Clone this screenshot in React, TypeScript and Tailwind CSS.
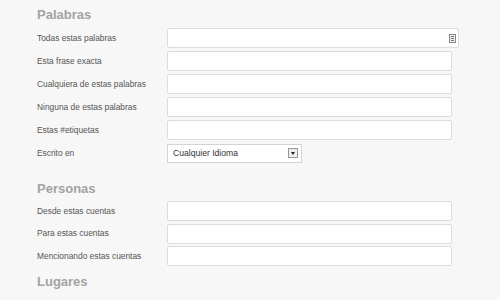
import React from 'react';

const Field: React.FC<{ label: string; wide?: boolean; icon?: boolean }> = ({ label, wide, icon }) => (
    <div className="flex items-center h-[20px]">
        <label className="w-[130px] text-[8.4px] text-[#555]">{label}</label>
        <div className={`relative h-[20px] bg-white border border-[#dcdcdc] rounded-[2px] ${wide ? 'w-[292px]' : 'w-[285px]'}`}>
            {icon && (
                <div className="absolute right-[2px] top-[5px] w-[7px] h-[9px] border border-[#888] bg-[#eee] flex flex-col items-center justify-center gap-[1px]">
                    <div className="w-[3px] h-[1px] bg-[#777]" />
                    <div className="w-[3px] h-[1px] bg-[#777]" />
                    <div className="w-[3px] h-[1px] bg-[#777]" />
                </div>
            )}
        </div>
    </div>
);

const Heading: React.FC<{ children: React.ReactNode }> = ({ children }) => (
    <h2 className="text-[13px] leading-[16px] font-bold text-[#a3a3a3]">{children}</h2>
);

export default function App() {
    return (
        <div className="w-[500px] h-[300px] overflow-hidden bg-[#f7f7f7] pl-[37px] pt-[7px]" style={{ fontFamily: '"Liberation Sans", Arial, sans-serif' }}>
            <Heading>Palabras</Heading>
            <div className="flex flex-col gap-[3px] mt-[5px]">
                <Field label="Todas estas palabras" wide icon />
                <Field label="Esta frase exacta" />
                <Field label="Cualquiera de estas palabras" />
                <Field label="Ninguna de estas palabras" />
                <Field label="Estas #etiquetas" />
                <div className="flex items-center h-[20px]">
                    <label className="w-[130px] text-[8.4px] text-[#555]">Escrito en</label>
                    <div className="w-[135px] h-[19px] bg-white border border-[#d4d4d4] flex items-center justify-between pl-[5px] pr-[3px]">
                        <span className="text-[8.6px] text-[#333]">Cualquier Idioma</span>
                        <div className="w-[10px] h-[10px] border border-[#999] bg-[#eee] flex items-center justify-center">
                            <div className="w-0 h-0 border-l-[2.5px] border-r-[2.5px] border-t-[3px] border-l-transparent border-r-transparent border-t-[#222]" />
                        </div>
                    </div>
                </div>
            </div>

            <div className="mt-[18px]">
                <Heading>Personas</Heading>
            </div>
            <div className="flex flex-col gap-[2.5px] mt-[4px]">
                <Field label="Desde estas cuentas" />
                <Field label="Para estas cuentas" />
                <Field label="Mencionando estas cuentas" />
            </div>

            <div className="mt-[8px]">
                <Heading>Lugares</Heading>
            </div>
        </div>
    );
}
